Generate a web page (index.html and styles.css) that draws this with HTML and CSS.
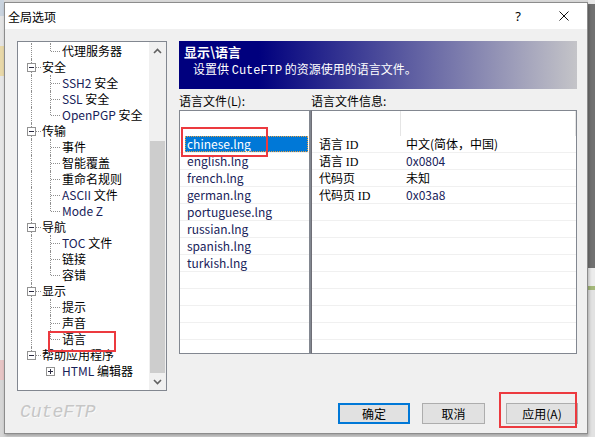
FILE: index.html
```html
<!DOCTYPE html>
<html>
<head>
    <meta charset="utf-8">
    <title>全局选项</title>
    <link rel="stylesheet" href="styles.css">
</head>
<body>
    <div class="desktop">
        <div class="behind-left"></div>

        <div class="dialog">
            <div class="titlebar">
                <span class="title">全局选项</span>
                <span class="caption-btn help">?</span>
                <span class="caption-btn">
                    <svg width="10" height="10" viewBox="0 0 10 10"><path d="M0.5 0.5 L9.5 9.5 M9.5 0.5 L0.5 9.5" stroke="#111" stroke-width="1" fill="none"/></svg>
                </span>
            </div>

            <div class="content">
                <div class="main">
                    <!-- options tree -->
                    <div class="tree">
                        <div class="tree-items">
                            <div class="node"><span class="guide pipe"></span><span class="guide elbow"></span><span class="label l2">代理服务器</span></div>
                            <div class="node"><span class="guide tee"><i class="box"></i></span><span class="label l1">安全</span></div>
                            <div class="node"><span class="guide pipe"></span><span class="guide tee"></span><span class="label l2"><span class="en">SSH2</span> 安全</span></div>
                            <div class="node"><span class="guide pipe"></span><span class="guide tee"></span><span class="label l2"><span class="en">SSL</span> 安全</span></div>
                            <div class="node"><span class="guide pipe"></span><span class="guide elbow"></span><span class="label l2"><span class="en">OpenPGP</span> 安全</span></div>
                            <div class="node"><span class="guide tee"><i class="box"></i></span><span class="label l1">传输</span></div>
                            <div class="node"><span class="guide pipe"></span><span class="guide tee"></span><span class="label l2">事件</span></div>
                            <div class="node"><span class="guide pipe"></span><span class="guide tee"></span><span class="label l2">智能覆盖</span></div>
                            <div class="node"><span class="guide pipe"></span><span class="guide tee"></span><span class="label l2">重命名规则</span></div>
                            <div class="node"><span class="guide pipe"></span><span class="guide tee"></span><span class="label l2"><span class="en">ASCII</span> 文件</span></div>
                            <div class="node"><span class="guide pipe"></span><span class="guide elbow"></span><span class="label l2"><span class="en">Mode Z</span></span></div>
                            <div class="node"><span class="guide tee"><i class="box"></i></span><span class="label l1">导航</span></div>
                            <div class="node"><span class="guide pipe"></span><span class="guide tee"></span><span class="label l2"><span class="en">TOC</span> 文件</span></div>
                            <div class="node"><span class="guide pipe"></span><span class="guide tee"></span><span class="label l2">链接</span></div>
                            <div class="node"><span class="guide pipe"></span><span class="guide elbow"></span><span class="label l2">容错</span></div>
                            <div class="node"><span class="guide tee"><i class="box"></i></span><span class="label l1">显示</span></div>
                            <div class="node"><span class="guide pipe"></span><span class="guide tee"></span><span class="label l2">提示</span></div>
                            <div class="node"><span class="guide pipe"></span><span class="guide tee"></span><span class="label l2">声音</span></div>
                            <div class="node"><span class="guide pipe"></span><span class="guide elbow"></span><span class="label l2">语言</span></div>
                            <div class="node"><span class="guide elbow"><i class="box"></i></span><span class="label l1">帮助应用程序</span></div>
                            <div class="node"><span class="guide"></span><span class="guide"><i class="box plus"></i></span><span class="label l2"><span class="en">HTML</span> 编辑器</span></div>
                        </div>
                        <div class="scrollbar">
                            <div class="sb-btn">
                                <svg width="17" height="17" viewBox="0 0 17 17"><polyline points="5,11 8.5,7.5 12,11" fill="none" stroke="#606060" stroke-width="1.6"/></svg>
                            </div>
                            <div class="sb-gap"></div>
                            <div class="sb-thumb"></div>
                            <div class="sb-btn">
                                <svg width="17" height="17" viewBox="0 0 17 17"><polyline points="5,7 8.5,10.5 12,7" fill="none" stroke="#606060" stroke-width="1.6"/></svg>
                            </div>
                        </div>
                    </div>

                    <!-- language page -->
                    <div class="panel">
                        <div class="banner">
                            <div class="banner-title">显示\语言</div>
                            <div class="banner-sub">设置供 <span class="mono">CuteFTP</span> 的资源使用的语言文件。</div>
                        </div>
                        <div class="labels">
                            <span class="label-files">语言文件(L):</span>
                            <span>语言文件信息:</span>
                        </div>
                        <div class="lists">
                            <div class="list files">
                                <div class="list-head"></div>
                                <div class="row"><span class="sel en">chinese.lng</span></div>
                                <div class="row"><span class="en">english.lng</span></div>
                                <div class="row"><span class="en">french.lng</span></div>
                                <div class="row"><span class="en">german.lng</span></div>
                                <div class="row"><span class="en">portuguese.lng</span></div>
                                <div class="row"><span class="en">russian.lng</span></div>
                                <div class="row"><span class="en">spanish.lng</span></div>
                                <div class="row"><span class="en">turkish.lng</span></div>
                                <div class="row"></div>
                                <div class="row"></div>
                                <div class="row"></div>
                                <div class="row"></div>
                                <div class="row"></div>
                            </div>
                            <div class="list info">
                                <div class="list-head"><span class="col1"></span><span class="col2"></span></div>
                                <div class="row"><span class="col1">语言 <span class="id">ID</span></span><span class="col2">中文(简体，中国)</span></div>
                                <div class="row"><span class="col1">语言 <span class="id">ID</span></span><span class="col2 en">0x0804</span></div>
                                <div class="row"><span class="col1">代码页</span><span class="col2">未知</span></div>
                                <div class="row"><span class="col1">代码页 <span class="id">ID</span></span><span class="col2 en">0x03a8</span></div>
                                <div class="row"></div>
                                <div class="row"></div>
                                <div class="row"></div>
                                <div class="row"></div>
                                <div class="row"></div>
                                <div class="row"></div>
                                <div class="row"></div>
                                <div class="row"></div>
                                <div class="row"></div>
                            </div>
                        </div>
                    </div>
                </div>

                <div class="footer">
                    <div class="brand">CuteFTP</div>
                    <div class="buttons">
                        <button class="btn default">确定</button>
                        <button class="btn narrow">取消</button>
                        <button class="btn apply">应用(A)</button>
                    </div>
                </div>
            </div>

            <!-- red annotation boxes -->
            <div class="mark mark-file"></div>
            <div class="mark mark-lang"></div>
            <div class="mark mark-apply"></div>
        </div>

        <div class="behind-right"></div>
    </div>
</body>
</html>
```

FILE: styles.css
```css
body {
    margin: 0;
    width: 595px;
    height: 437px;
    overflow: hidden;
    background-color: #d8d8d8;
    font-family: "Noto Sans CJK SC", "Noto Sans", sans-serif;
    font-size: 12px;
    color: #000;
}

.desktop {
    display: flex;
    height: 437px;
}

.behind-left {
    width: 4px;
    flex: none;
    background: linear-gradient(to bottom, #c9d3de 0, #c9d3de 16px, #e4e4e4 16px, #e4e4e4 46px, #e8d8a8 46px, #e8d8a8 76px, #e6e6e6 76px, #e6e6e6 360px, #e6c4c4 360px, #e6c4c4 380px, #d6d6d6 380px);
}

.behind-right {
    width: 7px;
    flex: none;
    background: linear-gradient(to bottom, #e8e8e8 0, #e8e8e8 4px, #717171 4px, #717171 268px, #ececec 268px, #ececec 286px, #a4b87a 286px, #a4b87a 290px, #e2e2e2 290px);
}

.dialog {
    position: relative;
    width: 584px;
    height: 432px;
    margin-top: 2px;
    flex: none;
    box-sizing: border-box;
    border: 1px solid #8c8c8c;
    background-color: #f0f0f0;
    display: flex;
    flex-direction: column;
    box-shadow: 1px 2px 3px rgba(0, 0, 0, 0.25);
}

.titlebar {
    height: 26px;
    display: flex;
    align-items: center;
    background-color: #fff;
}

.title {
    flex: 1;
    padding-left: 3px;
    font-size: 12px;
}

.caption-btn {
    width: 46px;
    height: 26px;
    display: flex;
    justify-content: center;
    align-items: center;
}

.help {
    font-family: "Noto Sans", sans-serif;
    font-size: 13px;
}

.content {
    flex: 1;
    display: flex;
    flex-direction: column;
}

.main {
    display: flex;
    padding: 12px 10px 0 12px;
}

/* tree */
.tree {
    width: 150px;
    height: 350px;
    box-sizing: border-box;
    border: 1px solid #828790;
    background-color: #fff;
    display: flex;
    flex: none;
}

.tree-items {
    flex: 1;
    overflow: hidden;
    padding: 1px 0 0 4px;
}

.node {
    display: flex;
    align-items: center;
    height: 16px;
    white-space: nowrap;
}

.guide {
    position: relative;
    width: 19px;
    height: 16px;
    flex: none;
}

.guide.pipe::before,
.guide.tee::before,
.guide.elbow::before {
    content: "";
    position: absolute;
    left: 9px;
    top: 0;
    bottom: 0;
    border-left: 1px dotted #8f8f8f;
}

.guide.elbow::before {
    bottom: 8px;
}

.guide.tee::after,
.guide.elbow::after {
    content: "";
    position: absolute;
    left: 10px;
    width: 9px;
    top: 8px;
    border-top: 1px dotted #8f8f8f;
}

.box {
    position: absolute;
    left: 5px;
    top: 4px;
    width: 9px;
    height: 9px;
    box-sizing: border-box;
    border: 1px solid #929292;
    background-color: #fff;
    z-index: 1;
}

.box::before {
    content: "";
    position: absolute;
    left: 1px;
    top: 3px;
    width: 5px;
    height: 1px;
    background-color: #2a2a40;
}

.box.plus::after {
    content: "";
    position: absolute;
    left: 3px;
    top: 1px;
    width: 1px;
    height: 5px;
    background-color: #2a2a40;
}

.label {
    line-height: 16px;
}

.l1 {
    margin-left: 1px;
}

.l2 {
    margin-left: 2px;
}

.en {
    color: #18225a;
}

.scrollbar {
    width: 17px;
    flex: none;
    display: flex;
    flex-direction: column;
    background-color: #f0f0f0;
}

.sb-btn {
    height: 17px;
}

.sb-btn svg {
    display: block;
}

.sb-gap {
    height: 82px;
}

.sb-thumb {
    flex: 1;
    margin: 0 1px;
    background-color: #cdcdcd;
}

/* right panel */
.panel {
    width: 398px;
    margin-left: 12px;
    flex: none;
}

.banner {
    height: 48px;
    box-sizing: border-box;
    padding: 3px 0 0 5px;
    color: #fff;
    background: linear-gradient(to right, #00007e 20%, #c4c4c8 100%);
}

.banner-title {
    font-weight: bold;
    font-size: 13px;
    line-height: 16px;
}

.banner-sub {
    padding-left: 9px;
    line-height: 17px;
}

.mono {
    font-family: "Liberation Mono", monospace;
}

.labels {
    display: flex;
    height: 21px;
    box-sizing: border-box;
    padding-top: 3px;
    line-height: 18px;
}

.label-files {
    width: 132px;
}

.lists {
    display: flex;
    height: 244px;
}

.list {
    box-sizing: border-box;
    border: 1px solid #828790;
    background-color: #fff;
    overflow: hidden;
}

.files {
    width: 132px;
    border-right-width: 2px;
}

.info {
    flex: 1;
    border-left-color: #6e6e76;
}

.list-head {
    height: 25px;
    display: flex;
}

.info .list-head .col1 {
    border-right: 1px solid #e5e5e5;
}

.info .list-head .col2 {
    width: 172px;
    border-right: 1px solid #e5e5e5;
}

.row {
    height: 16px;
    border-bottom: 1px solid #f0f0f0;
    display: flex;
    align-items: center;
    line-height: 16px;
}

.files .row {
    padding-left: 7px;
}

.files .row .sel {
    margin-left: -2px;
    padding-left: 2px;
    width: 121px;
    color: #fff;
    background-color: #0078d7;
    outline: 1px dotted #e8a040;
    outline-offset: -1px;
}

.col1 {
    width: 81px;
    padding-left: 7px;
    flex: none;
}

.col2 {
    padding-left: 6px;
}

.id {
    font-family: "Liberation Serif", serif;
}

/* footer */
.footer {
    flex: 1;
    display: flex;
    align-items: flex-start;
    padding: 12px 9px 0 15px;
}

.brand {
    flex: 1;
    margin-top: -3px;
    font-family: "Liberation Mono", monospace;
    font-style: italic;
    font-size: 18px;
    line-height: 24px;
    color: #c6c6c6;
    text-shadow: 1px 1px 0 #fafafa;
}

.buttons {
    display: flex;
}

.btn {
    height: 21px;
    width: 72px;
    box-sizing: border-box;
    border: 1px solid #adadad;
    background-color: #e1e1e1;
    font-family: "Noto Sans CJK SC", sans-serif;
    font-size: 12px;
    padding: 0;
    color: #000;
}

.btn.default {
    border: 2px solid #0078d7;
}

.btn.narrow {
    width: 63px;
    margin-left: 12px;
}

.btn.apply {
    margin-left: 21px;
}

/* annotations */
.mark {
    position: absolute;
    box-sizing: border-box;
    border: 2px solid #ec3a3f;
}

.mark-file {
    left: 176px;
    top: 124px;
    width: 87px;
    height: 30px;
}

.mark-lang {
    left: 43px;
    top: 328px;
    width: 68px;
    height: 21px;
}

.mark-apply {
    left: 494px;
    top: 389px;
    width: 78px;
    height: 36px;
}
```
